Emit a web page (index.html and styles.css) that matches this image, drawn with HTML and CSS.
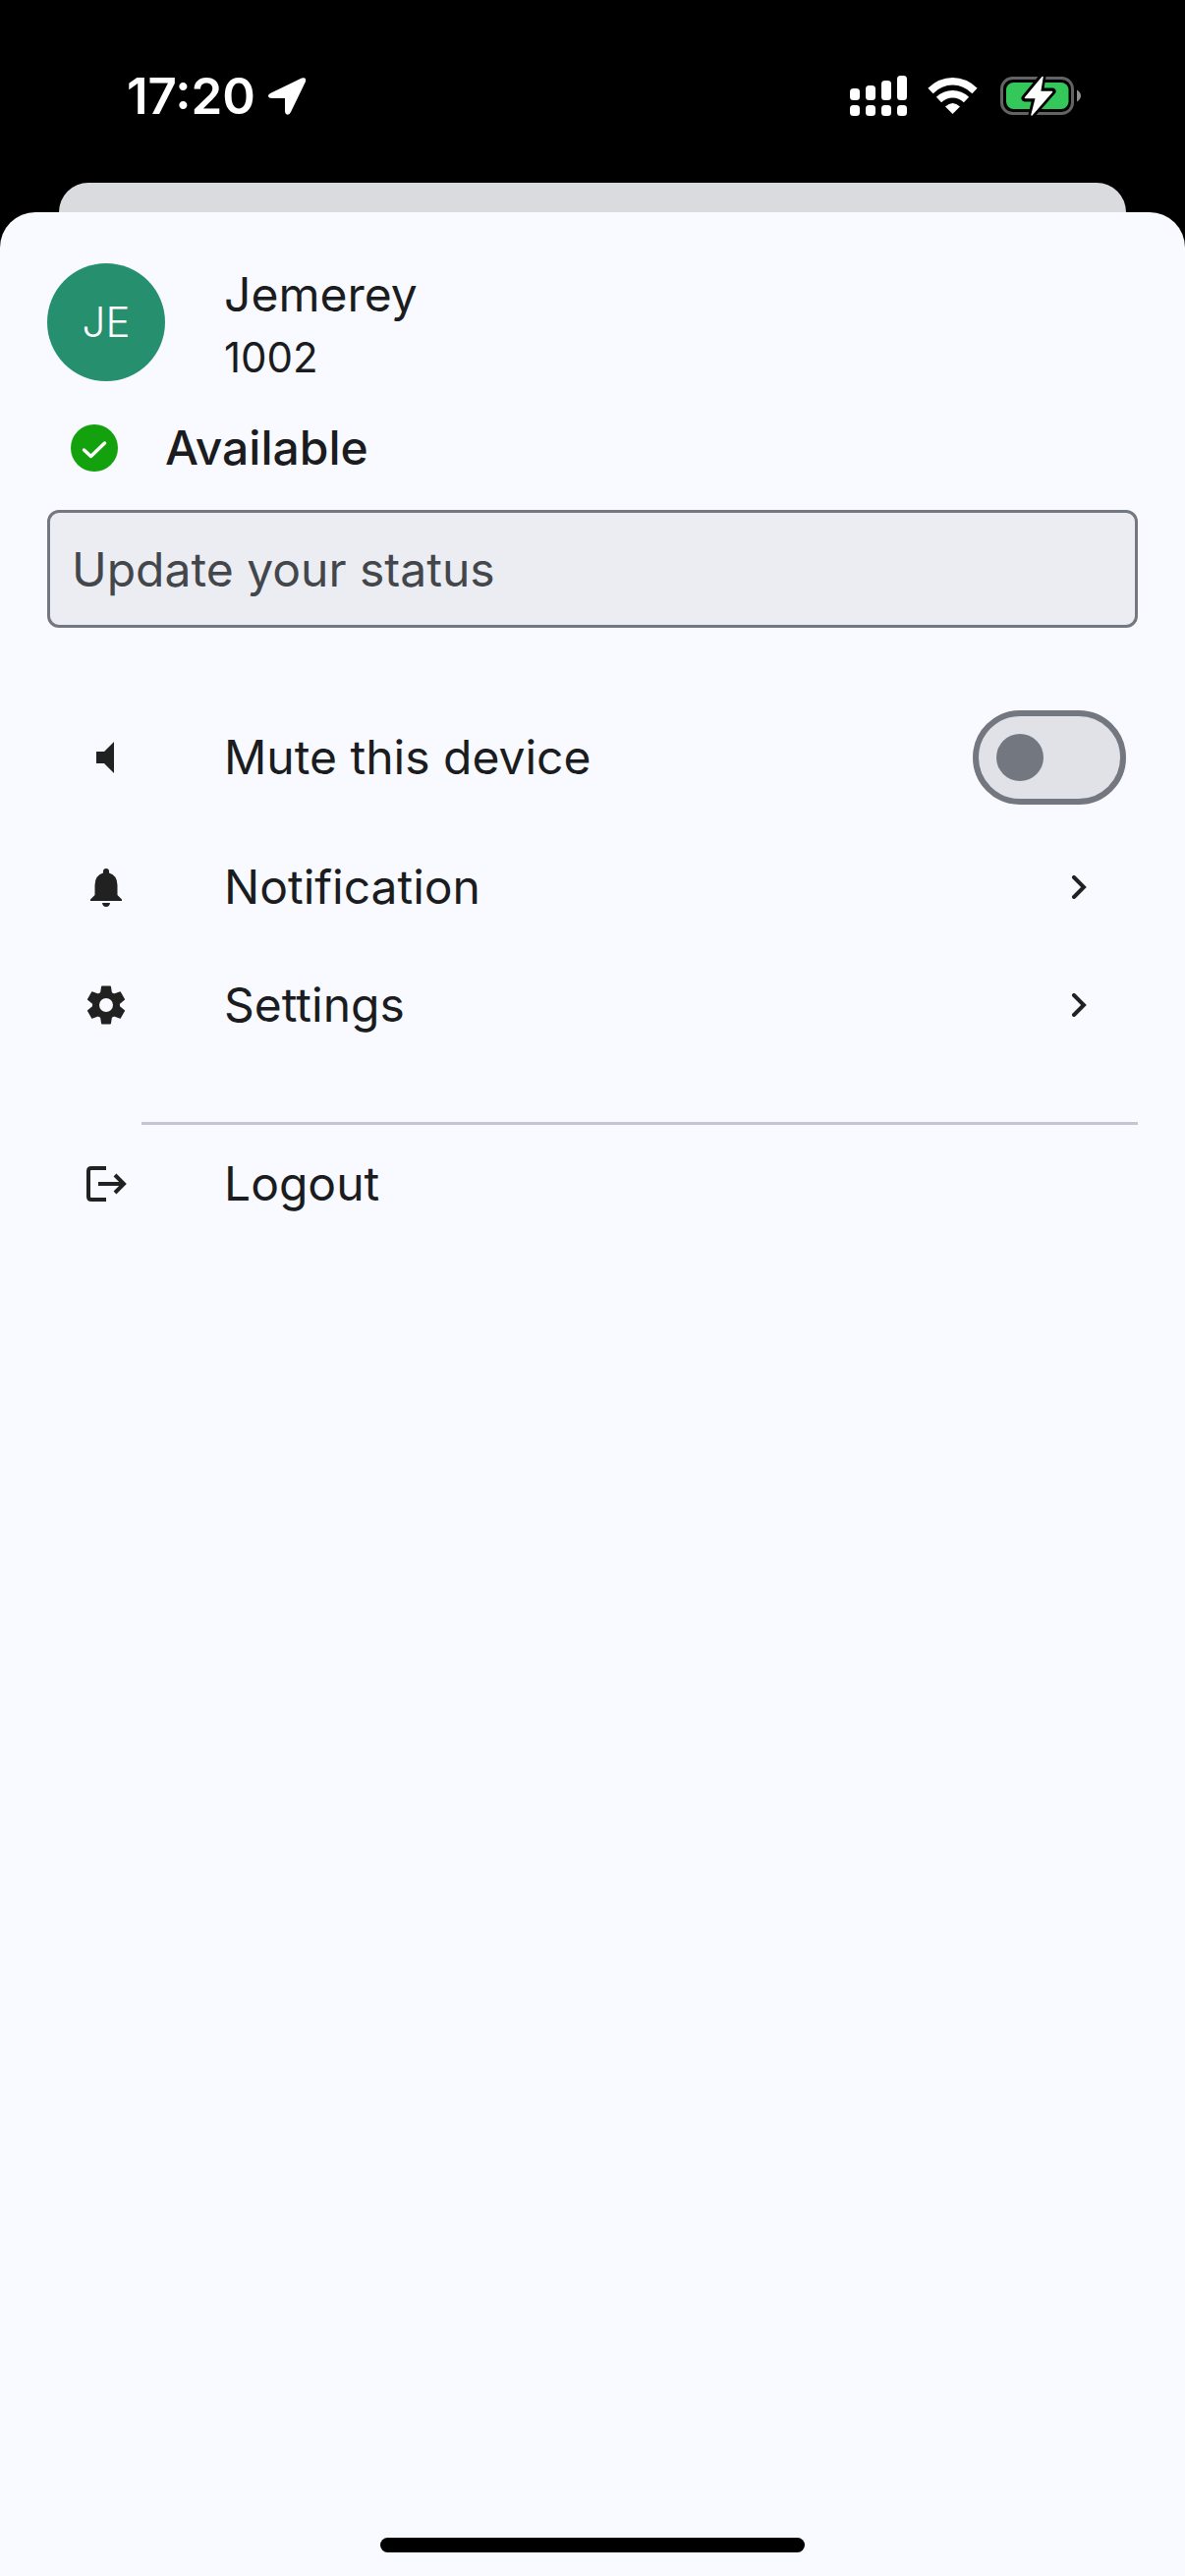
FILE: index.html
```html
<!DOCTYPE html>
<html lang="en">
<head>
<meta charset="utf-8">
<meta name="viewport" content="width=device-width, initial-scale=1">
<title>Profile</title>
<link rel="stylesheet" href="styles.css">
</head>
<body>
<header class="status-bar">
  <div class="clock">
    <time>17:20</time>
    <svg width="40" height="40" viewBox="0 0 40 40" aria-hidden="true"><path d="M3 17 35 1.500Q40 0 39 5L24 36Q22 40 19 38Q18 37 18 35V22H5Q1 22 1 19.500Q1 18 3 17Z" fill="#fff"/></svg>
  </div>
  <div class="indicators">
    <svg width="60" height="44" viewBox="863 76 60 44" aria-hidden="true"><g fill="#fff"><rect x="865" y="90" width="10" height="12" rx="3.500"/><rect x="881" y="87" width="10" height="15" rx="3.500"/><rect x="897" y="82" width="10" height="20" rx="3.500"/><rect x="913" y="77" width="10" height="25" rx="3.500"/><rect x="865" y="107" width="10" height="11" rx="3.500"/><rect x="881" y="107" width="10" height="11" rx="3.500"/><rect x="897" y="107" width="10" height="11" rx="3.500"/><rect x="913" y="107" width="10" height="11" rx="3.500"/></g></svg>
    <svg width="52" height="44" viewBox="945 76 52 44" aria-hidden="true"><g fill="none" stroke="#fff" stroke-width="7.500"><path d="M948 92.500Q958 82.800 970.500 82.800T993 92.500"/><path d="M956.500 101.500Q962.500 95.800 970.500 95.800T984.500 101.500"/></g><path d="M963 108.500Q970.500 101.500 978 108.500L970.500 116Z" fill="#fff"/></svg>
    <svg width="84" height="44" viewBox="1017 76 84 44" aria-hidden="true"><rect x="1019.500" y="79.500" width="72" height="36" rx="11" fill="none" stroke="#636366" stroke-width="3"/><rect x="1024" y="84" width="63.500" height="27" rx="7.500" fill="#34c759"/><path d="M1096 91.500Q1100 94 1100 97.500T1096 103.500Z" fill="#8e8e93"/><path d="M1061 78 1043 100H1054L1050 117 1071 93H1058.500Z" fill="#fff" stroke="#000" stroke-width="7" stroke-linejoin="round"/><path d="M1061 78.500 1043.500 99.500H1054.500L1050 117 1070.500 93.500H1058.500Z" fill="#fff" stroke="#fff" stroke-width="1.500" stroke-linejoin="round"/></svg>
  </div>
</header>
<div class="back-card"></div>
<main class="sheet">
  <section class="profile">
    <div class="avatar">JE</div>
    <div class="identity">
      <h1 class="name">Jemerey</h1>
      <p class="extension">1002</p>
    </div>
  </section>
  <button class="presence" type="button">
    <svg width="48" height="48" viewBox="0 0 48 48" aria-hidden="true"><circle cx="24" cy="24" r="24" fill="#13a10e"/><path d="M13.500 26 20.500 32.500 34.500 19" fill="none" stroke="#fff" stroke-width="3.500" stroke-linecap="round" stroke-linejoin="round"/></svg>
    <span>Available</span>
  </button>
  <input class="status-input" type="text" placeholder="Update your status" aria-label="Update your status">
  <nav class="menu">
    <label class="row row-tall" for="mute">
      <svg class="row-icon" viewBox="0 0 48 48" aria-hidden="true"><path d="M14 18H22L32 8V40L22 30H14Z"/></svg>
      <span class="row-label">Mute this device</span>
      <input class="switch" id="mute" type="checkbox" role="switch">
    </label>
    <button class="row" type="button">
      <svg class="row-icon" viewBox="0 0 48 48" aria-hidden="true"><path d="M21 8Q21 5 24 5T27 8V9.500Q35.500 12 35.500 22V32L40 36.500V38H8V36.500L12.500 32V22Q12.500 12 21 9.500ZM20 40H28Q27.500 44 24 44T20 40Z"/></svg>
      <span class="row-label">Notification</span>
      <svg class="chevron" viewBox="0 0 24 24" aria-hidden="true"><path d="M7 2 17 12 7 22"/></svg>
    </button>
    <button class="row" type="button">
      <svg class="row-icon" viewBox="-24 -24 48 48" aria-hidden="true"><defs><path id="teeth" d="M-4 -19.500H4Q5 -19.500 5 -18.500L6 -12H-6L-5 -18.500Q-5 -19.500 -4 -19.500ZM-4 19.500H4Q5 19.500 5 18.500L6 12H-6L-5 18.500Q-5 19.500 -4 19.500Z"/></defs><circle r="10.500" fill="none" stroke="#212121" stroke-width="7"/><use href="#teeth"/><use href="#teeth" transform="rotate(60)"/><use href="#teeth" transform="rotate(120)"/></svg>
      <span class="row-label">Settings</span>
      <svg class="chevron" viewBox="0 0 24 24" aria-hidden="true"><path d="M7 2 17 12 7 22"/></svg>
    </button>
    <hr class="divider">
    <button class="row" type="button">
      <svg class="row-icon line-icon" viewBox="0 0 48 48" aria-hidden="true"><path d="M24 8H9Q6 8 6 11V37Q6 40 9 40H24M16 24H42M33 15 42 24 33 33"/></svg>
      <span class="row-label">Logout</span>
    </button>
  </nav>
  <div class="home-indicator"></div>
</main>
</body>
</html>
```
FILE: styles.css
```css
* {
  box-sizing: border-box;
}

body {
  margin: 0;
  min-height: 100vh;
  display: flex;
  flex-direction: column;
  background: #000;
  color: #1a1c20;
  font-family: Inter, "Liberation Sans", sans-serif;
  font-size: 48px;
  line-height: 72px;
}

button {
  border: 0;
  background: none;
  color: inherit;
  font: inherit;
  text-align: left;
}

svg {
  display: block;
  flex: none;
}

.status-bar {
  display: flex;
  justify-content: space-between;
  align-items: center;
  height: 186px;
  padding: 10px 105px 0 129px;
  color: #fff;
}

.clock {
  display: flex;
  align-items: center;
  gap: 12px;
  font-size: 51px;
  font-weight: 600;
}

.indicators {
  display: flex;
  gap: 21px;
}

.back-card {
  height: 30px;
  margin: 0 60px;
  border-radius: 30px 30px 0 0;
  background: #dadbdf;
}

.sheet {
  flex: 1;
  display: flex;
  flex-direction: column;
  padding: 52px 48px 24px;
  border-radius: 36px 36px 0 0;
  background: #f9faff;
}

.profile {
  display: flex;
  align-items: flex-start;
  gap: 60px;
}

.avatar {
  width: 120px;
  height: 120px;
  border-radius: 50%;
  background: #268f6d;
  color: #fff;
  font-size: 42px;
  font-weight: 300;
  line-height: 120px;
  text-align: center;
}

.name,
.extension {
  margin: 0;
  font-size: 48px;
  font-weight: 400;
  line-height: 64px;
}

.extension {
  font-size: 42px;
}

.presence {
  display: flex;
  align-items: center;
  gap: 48px;
  height: 72px;
  margin: 24px 0 27px;
  padding: 0 24px;
  font-weight: 500;
}

.status-input {
  width: 100%;
  height: 120px;
  padding: 0 22px;
  border: 3px solid #737780;
  border-radius: 12px;
  background: #ecedf2;
  color: #1a1c20;
  font: inherit;
}

.status-input::placeholder {
  color: #43474b;
  opacity: 1;
}

.menu {
  margin-top: 60px;
}

.row {
  display: flex;
  align-items: center;
  width: 100%;
  height: 120px;
  padding: 0 12px 0 36px;
}

.row-tall {
  height: 144px;
}

.row-icon {
  width: 48px;
  height: 48px;
  fill: #212121;
}

.line-icon {
  fill: none;
  stroke: #212121;
  stroke-width: 4;
}

.row-label {
  flex: 1;
  margin-left: 96px;
}

.chevron {
  width: 24px;
  height: 24px;
  margin-right: 36px;
  fill: none;
  stroke: #212121;
  stroke-width: 4;
  stroke-linecap: round;
}

.switch {
  appearance: none;
  display: flex;
  align-items: center;
  width: 156px;
  height: 96px;
  margin: 0;
  padding: 0 18px;
  border: 6px solid #737780;
  border-radius: 48px;
  background: #e1e2e8;
}

.switch::before {
  content: "";
  width: 48px;
  height: 48px;
  border-radius: 50%;
  background: #737780;
}

.switch:checked {
  justify-content: flex-end;
}

.divider {
  height: 3px;
  margin: 59px 0 0 96px;
  border: 0;
  background: #c3c6d0;
}

.home-indicator {
  width: 39%;
  height: 15px;
  margin: auto auto 0;
  border-radius: 8px;
  background: #000;
}
```
